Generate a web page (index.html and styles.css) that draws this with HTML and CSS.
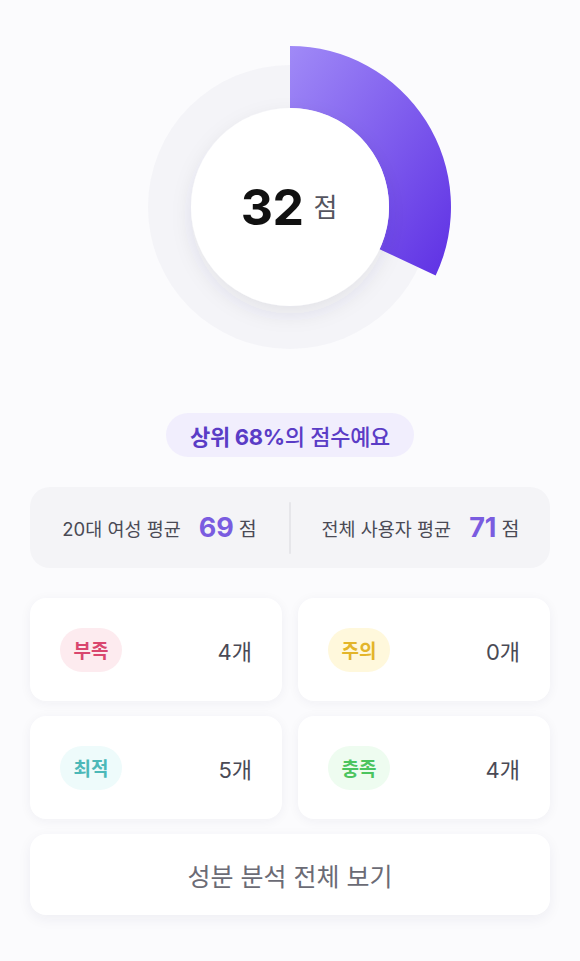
FILE: index.html
```html
<!DOCTYPE html>
<html lang="ko">
<head>
<meta charset="utf-8">
<link rel="stylesheet" href="styles.css">
</head>
<body>
<main class="page">
  <section class="chart">
    <svg class="donut" width="340" height="340" viewBox="0 0 340 340">
      <defs>
        <linearGradient id="pg" x1="0" y1="0" x2="1" y2="1">
          <stop offset="0" stop-color="#a08af7"/>
          <stop offset="1" stop-color="#5e30e4"/>
        </linearGradient>
        <filter id="sh" x="-30%" y="-30%" width="160%" height="160%">
          <feDropShadow dx="0" dy="8" stdDeviation="10" flood-color="#2a2a55" flood-opacity="0.09"/>
        </filter>
      </defs>
      <circle cx="170" cy="170" r="142" fill="#f4f4f8"/>
      <path d="M170 9 A161 161 0 0 1 315.67 238.55 L259.58 212.15 A99 99 0 0 0 170 71 Z" fill="url(#pg)"/>
      <circle cx="170" cy="170" r="99" fill="#ffffff" filter="url(#sh)"/>
    </svg>
    <div class="score"><span class="num">32</span><span class="unit">점</span></div>
  </section>

  <div class="rank"><strong>상위 68%</strong>의 점수예요</div>

  <section class="stats">
    <div class="stat"><span class="label">20대 여성 평균</span><span class="val">69</span><span class="pt">점</span></div>
    <div class="divider"></div>
    <div class="stat"><span class="label">전체 사용자 평균</span><span class="val">71</span><span class="pt">점</span></div>
  </section>

  <section class="grid">
    <div class="card"><span class="badge bad">부족</span><span class="count">4개</span></div>
    <div class="card"><span class="badge warn">주의</span><span class="count">0개</span></div>
    <div class="card"><span class="badge best">최적</span><span class="count">5개</span></div>
    <div class="card"><span class="badge good">충족</span><span class="count">4개</span></div>
  </section>

  <button class="more">성분 분석 전체 보기</button>
</main>
</body>
</html>
```

FILE: styles.css
```css
* { box-sizing: border-box; }
html, body { margin: 0; padding: 0; }
body {
  background: #fbfbfd;
  font-family: Inter, "Noto Sans CJK KR", "Noto Sans", sans-serif;
  color: #222;
  width: 580px;
  height: 961px;
  overflow: hidden;
}
.page {
  padding: 37px 30px 0;
  display: flex;
  flex-direction: column;
  align-items: center;
}
.chart {
  position: relative;
  width: 340px;
  height: 340px;
}
.donut { display: block; }
.score {
  position: absolute;
  left: 0; top: 0; right: 0; bottom: 0;
  display: flex;
  align-items: center;
  justify-content: center;
  gap: 10px;
  padding-right: 2px;
}
.num {
  font-size: 50px;
  font-weight: 700;
  color: #111;
  letter-spacing: -0.5px;
  line-height: 1;
}
.unit {
  font-size: 26px;
  color: #55555f;
  line-height: 1;
  margin-top: 2px;
}
.rank {
  margin-top: 36px;
  height: 44px;
  width: 248px;
  border-radius: 22px;
  background: #f1eefd;
  color: #5a3cc6;
  font-size: 22px;
  font-weight: 500;
  display: flex;
  align-items: center;
  justify-content: center;
  letter-spacing: -0.3px;
}
.rank strong { font-weight: 700; }
.stats {
  margin-top: 30px;
  width: 520px;
  height: 81px;
  background: #f4f4f7;
  border-radius: 20px;
  display: flex;
  align-items: center;
}
.stat {
  flex: 1;
  display: flex;
  align-items: center;
  justify-content: center;
}
.label {
  font-size: 18.5px;
  color: #4a4a55;
  margin-right: 18px;
}
.val {
  font-size: 27px;
  font-weight: 700;
  color: #7a5ce0;
  margin-right: 5px;
  line-height: 1;
}
.pt {
  font-size: 19.5px;
  color: #4a4a55;
}
.divider {
  width: 2px;
  height: 52px;
  background: #e6e6ea;
  border-radius: 1px;
}
.grid {
  margin-top: 30px;
  width: 520px;
  display: grid;
  grid-template-columns: 1fr 1fr;
  column-gap: 16px;
  row-gap: 15px;
}
.card {
  height: 103px;
  background: #ffffff;
  border-radius: 16px;
  box-shadow: 0 2px 12px rgba(40, 40, 80, 0.05);
  display: flex;
  align-items: center;
  justify-content: space-between;
  padding: 0 30px;
}
.badge {
  width: 62px;
  height: 44px;
  border-radius: 22px;
  display: flex;
  align-items: center;
  justify-content: center;
  font-size: 19px;
  font-weight: 700;
}
.bad { background: #fdebef; color: #d9466e; }
.warn { background: #fff8dc; color: #e3b52a; }
.best { background: #eefbfb; color: #4bb8b8; }
.good { background: #eefcf0; color: #4cc45f; }
.count {
  font-size: 22px;
  color: #4a4a55;
}
.more {
  margin-top: 15px;
  width: 520px;
  height: 81px;
  border: 0;
  background: #ffffff;
  border-radius: 16px;
  box-shadow: 0 4px 14px rgba(40, 40, 80, 0.06);
  font-family: Inter, "Noto Sans CJK KR", "Noto Sans", sans-serif;
  font-size: 25px;
  color: #6b6b75;
}
```
